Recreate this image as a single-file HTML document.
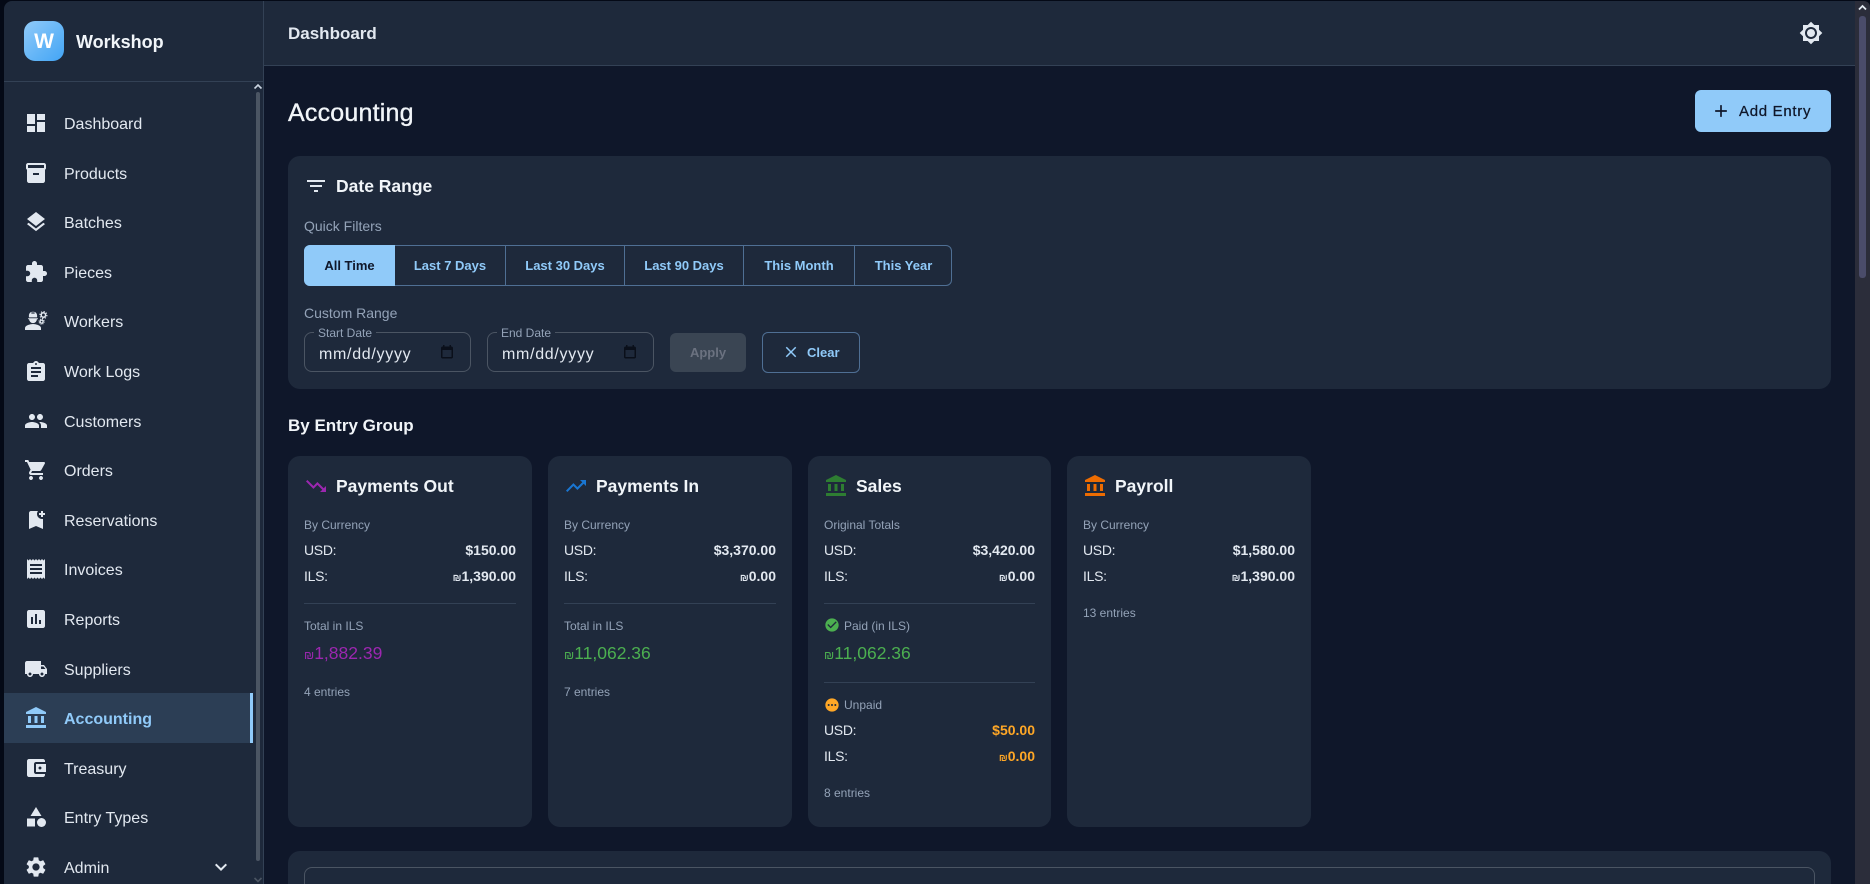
<!DOCTYPE html>
<html><head><meta charset="utf-8"><title>Accounting</title>
<style>
*{box-sizing:border-box}
html,body{margin:0;padding:0;width:1870px;height:884px;overflow:hidden;background:#040916;font-family:"Liberation Sans","DejaVu Sans",sans-serif}
#r{position:relative;width:1870px;height:884px;overflow:hidden}
.a{position:absolute}
.t{position:absolute;white-space:nowrap;line-height:20px;height:20px}
.ni{position:absolute;left:24px;width:24px;height:24px;fill:#e2e8f0}
.nt{position:absolute;left:64px;margin-top:2px;font-size:16px;line-height:20px;height:20px;color:#e2e8f0;white-space:nowrap}
.card{position:absolute;top:456px;height:371px;background:#1e293b;border-radius:12px}
.ct{position:absolute;font-size:17.5px;font-weight:700;color:#f1f5f9;line-height:20px;top:20px;white-space:nowrap}
.ci{position:absolute;left:16px;top:18px;width:24px;height:24px}
.s{position:absolute;left:16px;font-size:12px;color:#94a3b8;line-height:16px;white-space:nowrap}
.k{position:absolute;left:16px;font-size:14px;letter-spacing:-.3px;color:#e2e8f0;line-height:18px;white-space:nowrap}
.v{position:absolute;right:16px;font-size:14px;font-weight:700;color:#e2e8f0;line-height:18px;white-space:nowrap}
.d{position:absolute;left:16px;right:16px;height:1px;background:#334155}
.b{position:absolute;left:16px;font-size:17.5px;line-height:24px;margin-top:1px;white-space:nowrap}
.q{position:absolute;top:245px;height:41px;line-height:41px;text-align:center;font-size:13px;font-weight:700;color:#90caf9;border-right:1px solid #4f6f94}
.cur{font-size:10px}
</style></head><body><div id="r">

<!-- main backgrounds -->
<div class="a" style="left:264px;top:1px;width:1591px;height:883px;background:#0f172a"></div>

<!-- sidebar -->
<div class="a" style="left:4px;top:1px;width:260px;height:883px;background:#1e293b;border-right:1px solid #334155;border-top-left-radius:8px"></div>
<div class="a" style="left:24px;top:21px;width:40px;height:40px;border-radius:11px;background:linear-gradient(135deg,#90caf9,#42a5f5);color:#fff;font-size:21px;font-weight:700;text-align:center;line-height:42px">W</div>
<div class="t" style="left:76px;top:32px;font-size:18px;font-weight:700;color:#f1f5f9">Workshop</div>
<div class="a" style="left:4px;top:81px;width:259px;height:1px;background:#334155"></div>

<!-- sidebar scrollbar -->
<svg class="a" style="left:253px;top:82px" width="10" height="10" viewBox="0 0 10 10"><path d="M1.5 6.5 5 3l3.5 3.5" fill="none" stroke="#cbd5e1" stroke-width="1.6"/></svg>
<div class="a" style="left:256px;top:92px;width:4px;height:769px;background:#4b5563;border-radius:2px"></div>
<svg class="a" style="left:253px;top:876px" width="10" height="8" viewBox="0 0 10 8"><path d="M1.5 2 5 5.5 8.5 2" fill="none" stroke="#4b5563" stroke-width="1.6"/></svg>

<!-- active item -->
<div class="a" style="left:4px;top:693px;width:249px;height:50px;background:#2c3e55"></div>
<div class="a" style="left:250px;top:693px;width:3px;height:50px;background:#90caf9"></div>

<svg class="ni" style="top:111px" viewBox="0 0 24 24"><path d="M3 13h8V3H3v10zm0 8h8v-6H3v6zm10 0h8V11h-8v10zm0-18v6h8V3h-8z"/></svg>
<div class="nt" style="top:113px">Dashboard</div>
<svg class="ni" style="top:161px" viewBox="0 0 24 24"><path d="M20 2H4c-1 0-2 .9-2 2v3.01c0 .72.43 1.34 1 1.69V20c0 1.1 1.1 2 2 2h14c.9 0 2-.9 2-2V8.7c.57-.35 1-.97 1-1.69V4c0-1.1-1-2-2-2zm-5 12H9v-2h6v2zm5-7H4V4l16-.02V7z"/></svg>
<div class="nt" style="top:163px">Products</div>
<svg class="ni" style="top:210px" viewBox="0 0 24 24"><path d="M11.99 18.54l-7.37-5.73L3 14.07l9 7 9-7-1.63-1.27-7.38 5.74zM12 16l7.36-5.73L21 9l-9-7-9 7 1.63 1.27L12 16z"/></svg>
<div class="nt" style="top:212px">Batches</div>
<svg class="ni" style="top:260px" viewBox="0 0 24 24"><path d="M20.5 11H19V7c0-1.1-.9-2-2-2h-4V3.5C13 2.12 11.88 1 10.5 1S8 2.12 8 3.5V5H4c-1.1 0-1.99.9-1.99 2v3.8H3.5c1.49 0 2.7 1.21 2.7 2.7s-1.21 2.7-2.7 2.7H2V20c0 1.1.9 2 2 2h3.8v-1.5c0-1.49 1.21-2.7 2.7-2.7 1.49 0 2.7 1.21 2.7 2.7V22H17c1.1 0 2-.9 2-2v-4h1.5c1.38 0 2.5-1.12 2.5-2.5S21.88 11 20.5 11z"/></svg>
<div class="nt" style="top:262px">Pieces</div>
<svg class="ni" style="top:309px" viewBox="0 0 24 24"><path d="M9 15c-2.67 0-8 1.34-8 4v2h16v-2c0-2.66-5.33-4-8-4z"/><path d="M4.5 9.200h9a.4.4 0 0 1 0 1h-.6a3.900 3.900 0 0 1-7.800 0h-.6a.4.4 0 0 1 0-1z"/><path d="M4.900 8.400V6.600C4.900 4.900 6 3.400 7.600 2.800V5h1V2.500h.8V5h1V2.800c1.600.6 2.700 2.100 2.700 3.800v1.800z"/><circle cx="19.400" cy="6" r="2.200" fill="none" stroke="#e2e8f0" stroke-width="1.500"/><circle cx="19.400" cy="6" r="3.500" fill="none" stroke="#e2e8f0" stroke-width="1.100" stroke-dasharray="1.300 1.450"/><circle cx="17.600" cy="12.600" r="1.500" fill="none" stroke="#e2e8f0" stroke-width="1.300"/><circle cx="17.600" cy="12.600" r="2.600" fill="none" stroke="#e2e8f0" stroke-width="1" stroke-dasharray="1 1.040"/></svg>
<div class="nt" style="top:311px">Workers</div>
<svg class="ni" style="top:360px" viewBox="0 0 24 24"><path d="M19 3h-4.18C14.4 1.84 13.3 1 12 1c-1.3 0-2.4.84-2.82 2H5c-1.1 0-2 .9-2 2v14c0 1.1.9 2 2 2h14c1.1 0 2-.9 2-2V5c0-1.1-.9-2-2-2zm-7 0c.55 0 1 .45 1 1s-.45 1-1 1-1-.45-1-1 .45-1 1-1zm2 14H7v-2h7v2zm3-4H7v-2h10v2zm0-4H7V7h10v2z"/></svg>
<div class="nt" style="top:361px">Work Logs</div>
<svg class="ni" style="top:409px" viewBox="0 0 24 24"><path d="M16 11c1.66 0 2.99-1.34 2.99-3S17.66 5 16 5c-1.66 0-3 1.34-3 3s1.34 3 3 3zm-8 0c1.66 0 2.99-1.34 2.99-3S9.66 5 8 5C6.34 5 5 6.34 5 8s1.34 3 3 3zm0 2c-2.33 0-7 1.17-7 3.5V19h14v-2.5c0-2.33-4.67-3.5-7-3.5zm8 0c-.29 0-.62.02-.97.05 1.16.84 1.97 1.97 1.97 3.45V19h6v-2.5c0-2.33-4.67-3.5-7-3.5z"/></svg>
<div class="nt" style="top:411px">Customers</div>
<svg class="ni" style="top:458px" viewBox="0 0 24 24"><path d="M7 18c-1.1 0-1.99.9-1.99 2S5.9 22 7 22s2-.9 2-2-.9-2-2-2zM1 2v2h2l3.6 7.59-1.35 2.45c-.16.28-.25.61-.25.96 0 1.1.9 2 2 2h12v-2H7.42c-.14 0-.25-.11-.25-.25l.03-.12.9-1.63h7.45c.75 0 1.41-.41 1.75-1.03l3.58-6.49c.08-.14.12-.31.12-.48 0-.55-.45-1-1-1H5.21l-.94-2H1zm16 16c-1.1 0-1.99.9-1.99 2s.89 2 1.99 2 2-.9 2-2-.9-2-2-2z"/></svg>
<div class="nt" style="top:460px">Orders</div>
<svg class="ni" style="top:508px" viewBox="0 0 24 24"><path d="M21 7h-2v2h-2V7h-2V5h2V3h2v2h2v2zm-2 14-7-3-7 3V5c0-1.1.9-2 2-2h7c-.63.84-1 1.87-1 3 0 2.76 2.24 5 5 5 .34 0 .68-.03 1-.1V21z"/></svg>
<div class="nt" style="top:510px">Reservations</div>
<svg class="ni" style="top:557px" viewBox="0 0 24 24"><path d="M18 17H6v-2h12v2zm0-4H6v-2h12v2zm0-4H6V7h12v2zM3 22l1.5-1.5L6 22l1.5-1.5L9 22l1.5-1.5L12 22l1.5-1.5L15 22l1.5-1.5L18 22l1.5-1.5L21 22V2l-1.5 1.5L18 2l-1.5 1.5L15 2l-1.5 1.5L12 2l-1.5 1.5L9 2 7.5 3.5 6 2 4.5 3.5 3 2v20z"/></svg>
<div class="nt" style="top:559px">Invoices</div>
<svg class="ni" style="top:607px" viewBox="0 0 24 24"><path d="M19 3H5c-1.1 0-2 .9-2 2v14c0 1.1.9 2 2 2h14c1.1 0 2-.9 2-2V5c0-1.1-.9-2-2-2zM9 17H7v-7h2v7zm4 0h-2V7h2v10zm4 0h-2v-4h2v4z"/></svg>
<div class="nt" style="top:609px">Reports</div>
<svg class="ni" style="top:657px" viewBox="0 0 24 24"><path d="M20 8h-3V4H3c-1.1 0-2 .9-2 2v11h2c0 1.66 1.34 3 3 3s3-1.34 3-3h6c0 1.66 1.34 3 3 3s3-1.34 3-3h2v-5l-3-4zM6 18.5c-.83 0-1.5-.67-1.5-1.5s.67-1.5 1.5-1.5 1.5.67 1.5 1.5-.67 1.5-1.5 1.5zm13.5-9 1.96 2.5H17V9.5h2.5zm-1.5 9c-.83 0-1.5-.67-1.5-1.5s.67-1.5 1.5-1.5 1.5.67 1.5 1.5-.67 1.5-1.5 1.5z"/></svg>
<div class="nt" style="top:659px">Suppliers</div>
<svg class="ni" style="top:706px;fill:#90caf9" viewBox="0 0 24 24"><path d="M4 10h3v7H4zM10.5 10h3v7h-3zM2 19h20v3H2zM17 10h3v7h-3zM12 1 2 6v2h20V6z"/></svg>
<div class="nt" style="top:708px;color:#90caf9;font-weight:700">Accounting</div>
<svg class="ni" style="top:756px" viewBox="0 0 24 24"><path d="M21 18v1c0 1.1-.9 2-2 2H5c-1.11 0-2-.9-2-2V5c0-1.1.89-2 2-2h14c1.1 0 2 .9 2 2v1h-9c-1.11 0-2 .9-2 2v8c0 1.1.89 2 2 2h9zm-9-2h10V8H12v8zm4-2.5c-.83 0-1.5-.67-1.5-1.5s.67-1.5 1.5-1.5 1.5.67 1.5 1.5-.67 1.5-1.5 1.5z"/></svg>
<div class="nt" style="top:758px">Treasury</div>
<svg class="ni" style="top:805px" viewBox="0 0 24 24"><path d="M12 2l-5.5 9h11z"/><circle cx="17.5" cy="17.5" r="4.5"/><path d="M3 13.5h8v8H3z"/></svg>
<div class="nt" style="top:807px">Entry Types</div>
<svg class="ni" style="top:855px" viewBox="0 0 24 24"><path d="M19.14 12.94c.04-.3.06-.61.06-.94 0-.32-.02-.64-.07-.94l2.03-1.58c.18-.14.23-.41.12-.61l-1.92-3.32c-.12-.22-.37-.29-.59-.22l-2.39.96c-.5-.38-1.03-.7-1.62-.94l-.36-2.54c-.04-.24-.24-.41-.48-.41h-3.84c-.24 0-.43.17-.47.41l-.36 2.54c-.59.24-1.13.57-1.62.94l-2.39-.96c-.22-.08-.47 0-.59.22L2.74 8.87c-.12.21-.08.47.12.61l2.03 1.58c-.05.3-.09.63-.09.94s.02.64.07.94l-2.03 1.58c-.18.14-.23.41-.12.61l1.92 3.32c.12.22.37.29.59.22l2.39-.96c.5.38 1.03.7 1.62.94l.36 2.54c.05.24.24.41.48.41h3.84c.24 0 .44-.17.47-.41l.36-2.54c.59-.24 1.13-.56 1.62-.94l2.39.96c.22.08.47 0 .59-.22l1.92-3.32c.12-.22.07-.47-.12-.61l-2.01-1.58zM12 15.6c-1.98 0-3.6-1.62-3.6-3.6s1.62-3.6 3.6-3.6 3.6 1.62 3.6 3.6-1.62 3.6-3.6 3.6z"/></svg>
<div class="nt" style="top:857px">Admin</div>
<svg class="ni" style="left:209px;top:855px" viewBox="0 0 24 24"><path d="M16.59 8.59 12 13.17 7.41 8.59 6 10l6 6 6-6z"/></svg>

<!-- header -->
<div class="a" style="left:264px;top:1px;width:1591px;height:65px;background:#1e293b;border-bottom:1px solid #334155"></div>
<div class="t" style="left:288px;top:24px;font-size:17px;font-weight:700;color:#e2e8f0">Dashboard</div>
<svg class="a" style="left:1799px;top:21px;fill:#e2e8f0" width="24" height="24" viewBox="0 0 24 24"><path d="M20 8.69V4h-4.69L12 .69 8.69 4H4v4.69L.69 12 4 15.31V20h4.69L12 23.31 15.31 20H20v-4.69L23.31 12 20 8.69zM12 18c-3.31 0-6-2.69-6-6s2.69-6 6-6 6 2.69 6 6-2.69 6-6 6zm0-10c-2.21 0-4 1.79-4 4s1.79 4 4 4 4-1.79 4-4-1.79-4-4-4z"/></svg>

<!-- page scrollbar -->
<div class="a" style="left:1855px;top:1px;width:15px;height:883px;background:#2b2d3a;border-top-right-radius:6px"></div>
<svg class="a" style="left:1857px;top:3px" width="11" height="10" viewBox="0 0 11 10"><path d="M2 6.5 5.5 3 9 6.5" fill="none" stroke="#e2e8f0" stroke-width="1.8"/></svg>
<div class="a" style="left:1859px;top:16px;width:7px;height:262px;background:#4a4c6a;border-radius:3px"></div>

<!-- title row -->
<div class="t" style="left:288px;top:101px;height:24px;line-height:24px;font-size:25px;font-weight:400;letter-spacing:.2px;color:#f1f5f9;-webkit-text-stroke:.35px #f1f5f9">Accounting</div>
<div class="a" style="left:1695px;top:90px;width:136px;height:42px;background:#90caf9;border-radius:6px"></div>
<svg class="a" style="left:1711px;top:101px;fill:#0f172a" width="20" height="20" viewBox="0 0 24 24"><path d="M19 13h-6v6h-2v-6H5v-2h6V5h2v6h6v2z"/></svg>
<div class="t" style="left:1739px;top:102px;font-size:15px;font-weight:400;color:#0f172a;letter-spacing:.7px;-webkit-text-stroke:.25px #0f172a">Add Entry</div>

<!-- date range card -->
<div class="a" style="left:288px;top:156px;width:1543px;height:233px;background:#1e293b;border-radius:12px"></div>
<svg class="a" style="left:304px;top:174px;fill:#e2e8f0" width="24" height="24" viewBox="0 0 24 24"><path d="M10 18h4v-2h-4v2zM3 6v2h18V6H3zm3 7h12v-2H6v2z"/></svg>
<div class="t" style="left:336px;top:176px;font-size:17.5px;font-weight:700;color:#f1f5f9">Date Range</div>
<div class="t" style="left:304px;top:216px;font-size:14px;color:#94a3b8">Quick Filters</div>

<div class="a" style="left:304px;top:245px;width:648px;height:41px;border:1px solid #4f6f94;border-radius:6px"></div>
<div class="a" style="left:304px;top:245px;width:91px;height:41px;background:#90caf9;border-radius:6px 0 0 6px;line-height:41px;text-align:center;font-size:13px;font-weight:700;color:#0f172a">All Time</div>
<div class="q" style="left:395px;width:111px">Last 7 Days</div>
<div class="q" style="left:506px;width:119px">Last 30 Days</div>
<div class="q" style="left:625px;width:119px">Last 90 Days</div>
<div class="q" style="left:744px;width:111px">This Month</div>
<div class="q" style="left:855px;width:97px;border-right:none">This Year</div>

<div class="t" style="left:304px;top:303px;font-size:14px;color:#94a3b8">Custom Range</div>

<div class="a" style="left:304px;top:332px;width:167px;height:40px;border:1px solid #4b5563;border-radius:8px"></div>
<div class="a" style="left:314px;top:326px;padding:0 4px;background:#1e293b;font-size:12px;line-height:14px;color:#94a3b8;white-space:nowrap">Start Date</div>
<div class="t" style="left:319px;top:345px;font-size:16px;letter-spacing:.7px;color:#e2e8f0">mm/dd/yyyy</div>
<svg class="a" style="left:440px;top:344px" width="14" height="15" viewBox="0 0 14 15"><path d="M3 1v1.500H2.500C1.700 2.500 1 3.200 1 4v9c0 .8.7 1.500 1.500 1.500h9c.8 0 1.500-.7 1.500-1.500V4c0-.8-.7-1.500-1.500-1.500H11V1H9.500v1.500h-5V1zM2.500 6h9v7h-9z" fill="#0a0f1a"/></svg>

<div class="a" style="left:487px;top:332px;width:167px;height:40px;border:1px solid #4b5563;border-radius:8px"></div>
<div class="a" style="left:497px;top:326px;padding:0 4px;background:#1e293b;font-size:12px;line-height:14px;color:#94a3b8;white-space:nowrap">End Date</div>
<div class="t" style="left:502px;top:345px;font-size:16px;letter-spacing:.7px;color:#e2e8f0">mm/dd/yyyy</div>
<svg class="a" style="left:623px;top:344px" width="14" height="15" viewBox="0 0 14 15"><path d="M3 1v1.500H2.500C1.700 2.500 1 3.200 1 4v9c0 .8.7 1.500 1.500 1.500h9c.8 0 1.500-.7 1.500-1.500V4c0-.8-.7-1.500-1.500-1.500H11V1H9.500v1.500h-5V1zM2.500 6h9v7h-9z" fill="#0a0f1a"/></svg>

<div class="a" style="left:670px;top:333px;width:76px;height:39px;background:#3a4553;border-radius:6px;line-height:39px;text-align:center;font-size:13px;font-weight:700;color:#6b7280">Apply</div>
<div class="a" style="left:762px;top:332px;width:98px;height:41px;border:1px solid #4f6f94;border-radius:6px"></div>
<svg class="a" style="left:782px;top:343px;fill:#90caf9" width="18" height="18" viewBox="0 0 24 24"><path d="M19 6.41 17.59 5 12 10.59 6.41 5 5 6.41 10.59 12 5 17.59 6.41 19 12 13.41 17.59 19 19 17.59 13.41 12z"/></svg>
<div class="t" style="left:807px;top:343px;font-size:13px;font-weight:700;color:#90caf9">Clear</div>

<div class="t" style="left:288px;top:416px;font-size:17px;font-weight:700;color:#f1f5f9">By Entry Group</div>

<!-- card 1 -->
<div class="card" style="left:288px;width:244px">
<svg class="ci" style="fill:#9c27b0" viewBox="0 0 24 24"><path d="M16 18l2.290-2.290-4.880-4.880-4 4L2 7.410 3.410 6l6 6 4-4 6.300 6.290L22 12v6z"/></svg>
<div class="ct" style="left:48px">Payments Out</div>
<div class="s" style="top:61px">By Currency</div>
<div class="k" style="top:85px">USD:</div><div class="v" style="top:85px">$150.00</div>
<div class="k" style="top:111px">ILS:</div><div class="v" style="top:111px"><span class="cur">₪</span>1,390.00</div>
<div class="d" style="top:147px"></div>
<div class="s" style="top:162px">Total in ILS</div>
<div class="b" style="top:184px;color:#9c27b0"><span style="font-size:12px">₪</span>1,882.39</div>
<div class="s" style="top:228px">4 entries</div>
</div>

<!-- card 2 -->
<div class="card" style="left:548px;width:244px">
<svg class="ci" style="fill:#1976d2" viewBox="0 0 24 24"><path d="M16 6l2.290 2.290-4.880 4.880-4-4L2 16.590 3.410 18l6-6 4 4 6.300-6.290L22 12V6z"/></svg>
<div class="ct" style="left:48px">Payments In</div>
<div class="s" style="top:61px">By Currency</div>
<div class="k" style="top:85px">USD:</div><div class="v" style="top:85px">$3,370.00</div>
<div class="k" style="top:111px">ILS:</div><div class="v" style="top:111px"><span class="cur">₪</span>0.00</div>
<div class="d" style="top:147px"></div>
<div class="s" style="top:162px">Total in ILS</div>
<div class="b" style="top:184px;color:#4caf50"><span style="font-size:12px">₪</span>11,062.36</div>
<div class="s" style="top:228px">7 entries</div>
</div>

<!-- card 3 -->
<div class="card" style="left:808px;width:243px">
<svg class="ci" style="fill:#2e7d32" viewBox="0 0 24 24"><path d="M4 10h3v7H4zM10.500 10h3v7h-3zM2 19h20v3H2zM17 10h3v7h-3zM12 1 2 6v2h20V6z"/></svg>
<div class="ct" style="left:48px">Sales</div>
<div class="s" style="top:61px">Original Totals</div>
<div class="k" style="top:85px">USD:</div><div class="v" style="top:85px">$3,420.00</div>
<div class="k" style="top:111px">ILS:</div><div class="v" style="top:111px"><span class="cur">₪</span>0.00</div>
<div class="d" style="top:147px"></div>
<svg class="a" style="left:16px;top:161px;fill:#4caf50" width="16" height="16" viewBox="0 0 24 24"><path d="M12 2C6.480 2 2 6.480 2 12s4.480 10 10 10 10-4.480 10-10S17.520 2 12 2zm-2 15l-5-5 1.410-1.410L10 14.170l7.590-7.590L19 8l-9 9z"/></svg>
<div class="s" style="left:36px;top:162px">Paid (in ILS)</div>
<div class="b" style="top:184px;color:#4caf50"><span style="font-size:12px">₪</span>11,062.36</div>
<div class="d" style="top:226px"></div>
<svg class="a" style="left:16px;top:241px;fill:#ffa726" width="16" height="16" viewBox="0 0 24 24"><path d="M12 2C6.480 2 2 6.480 2 12s4.480 10 10 10 10-4.480 10-10S17.520 2 12 2zM7 13.500c-.83 0-1.500-.67-1.500-1.500s.67-1.500 1.500-1.500 1.500.67 1.500 1.500-.67 1.500-1.500 1.500zm5 0c-.83 0-1.500-.67-1.500-1.500s.67-1.500 1.500-1.500 1.500.67 1.500 1.500-.67 1.500-1.500 1.500zm5 0c-.83 0-1.500-.67-1.500-1.500s.67-1.500 1.500-1.500 1.500.67 1.500 1.500-.67 1.500-1.500 1.500z"/></svg>
<div class="s" style="left:36px;top:241px">Unpaid</div>
<div class="k" style="top:265px">USD:</div><div class="v" style="top:265px;color:#ffa726">$50.00</div>
<div class="k" style="top:291px">ILS:</div><div class="v" style="top:291px;color:#ffa726"><span class="cur">₪</span>0.00</div>
<div class="s" style="top:329px">8 entries</div>
</div>

<!-- card 4 -->
<div class="card" style="left:1067px;width:244px">
<svg class="ci" style="fill:#ed6c02" viewBox="0 0 24 24"><path d="M4 10h3v7H4zM10.500 10h3v7h-3zM2 19h20v3H2zM17 10h3v7h-3zM12 1 2 6v2h20V6z"/></svg>
<div class="ct" style="left:48px">Payroll</div>
<div class="s" style="top:61px">By Currency</div>
<div class="k" style="top:85px">USD:</div><div class="v" style="top:85px">$1,580.00</div>
<div class="k" style="top:111px">ILS:</div><div class="v" style="top:111px"><span class="cur">₪</span>1,390.00</div>
<div class="s" style="top:149px">13 entries</div>
</div>

<!-- bottom card -->
<div class="a" style="left:288px;top:851px;width:1543px;height:60px;background:#1e293b;border-radius:12px"></div>
<div class="a" style="left:304px;top:867px;width:1511px;height:40px;border:1px solid #4b5563;border-radius:8px"></div>

</div></body></html>
